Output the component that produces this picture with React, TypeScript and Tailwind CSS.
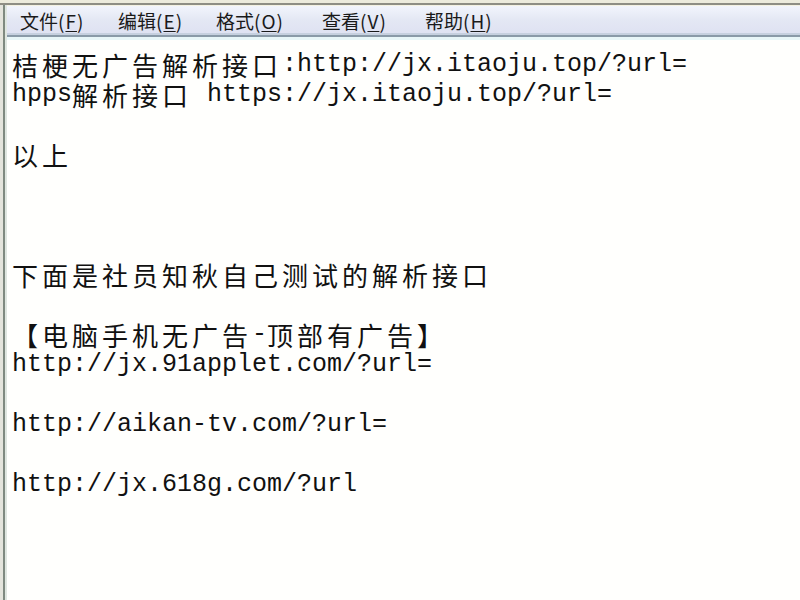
import React from "react";

const cjk = '"Noto Sans CJK SC", "Noto Sans", sans-serif';

function C({ t }: { t: string }) {
  return (
    <span
      className="text-[26px] leading-[30px] tracking-[4px]"
      style={{ fontFamily: cjk }}
    >
      {t}
    </span>
  );
}

function M({ t }: { t: string }) {
  return (
    <span className="text-[25px] leading-[30px] whitespace-pre font-['Liberation_Mono',monospace]">
      {t}
    </span>
  );
}

function Line({ children }: { children?: React.ReactNode }) {
  return (
    <div className="h-[30px] leading-[30px] whitespace-nowrap flex items-center">
      {children}
    </div>
  );
}

function MenuItem({ label, k, w }: { label: string; k: string; w: string }) {
  return (
    <span className={`${w} shrink-0 text-[19px] leading-[24px] text-[#1a1a1a]`} style={{ fontFamily: cjk }}>
      {label}<span className="tracking-[1px]">(<span className="underline underline-offset-2">{k}</span>)</span>
    </span>
  );
}

export default function App() {
  return (
    <div className="w-[800px] h-[600px] overflow-hidden bg-white flex flex-col">
      {/* top frame */}
      <div className="h-[3px] bg-[#ecebdc] shrink-0" />
      <div className="h-[2px] bg-[#8e8e84] shrink-0" />
      <div className="flex flex-1 min-h-0">
        {/* left frame */}
        <div className="flex shrink-0">
          <div className="w-[3px] bg-[#e4e4dc]" />
          <div className="w-[2px] bg-[#7f8a80]" />
          <div className="w-[2px] bg-[#dfe6e0]" />
        </div>
        <div className="flex-1 flex flex-col min-w-0">
          <div className="h-[1px] bg-[#f4f2e2]" />
          {/* menu bar */}
          <div className="h-[27px] bg-gradient-to-b from-[#f2f5fc] via-[#e4e8f4] to-[#dfe2f2] flex items-center pl-[13px] pt-[3px]">
            <MenuItem label="文件" k="F" w="w-[98px]" />
            <MenuItem label="编辑" k="E" w="w-[98px]" />
            <MenuItem label="格式" k="O" w="w-[106px]" />
            <MenuItem label="查看" k="V" w="w-[103px]" />
            <MenuItem label="帮助" k="H" w="w-[100px]" />
          </div>
          <div className="h-[2px] bg-[#c6d0df]" />
          <div className="h-[2px] bg-[#8a9aa8]" />
          <div className="h-[3px] bg-[#e8f6f8]" />
          {/* text area */}
          <div className="flex-1 bg-[#fffffd] text-[#111] pl-[5px] pt-[10px]">
            <Line>
              <C t="桔梗无广告解析接口" />
              <M t=":http://jx.itaoju.top/?url=" />
            </Line>
            <Line>
              <M t="hpps" />
              <C t="解析接口" />
              <M t=" https://jx.itaoju.top/?url=" />
            </Line>
            <Line />
            <Line>
              <C t="以上" />
            </Line>
            <Line />
            <Line />
            <Line />
            <Line>
              <C t="下面是社员知秋自己测试的解析接口" />
            </Line>
            <Line />
            <Line>
              <C t="【电脑手机无广告" />
              <M t="-" />
              <C t="顶部有广告】" />
            </Line>
            <Line>
              <M t="http://jx.91applet.com/?url=" />
            </Line>
            <Line />
            <Line>
              <M t="http://aikan-tv.com/?url=" />
            </Line>
            <Line />
            <Line>
              <M t="http://jx.618g.com/?url" />
            </Line>
          </div>
        </div>
      </div>
    </div>
  );
}
